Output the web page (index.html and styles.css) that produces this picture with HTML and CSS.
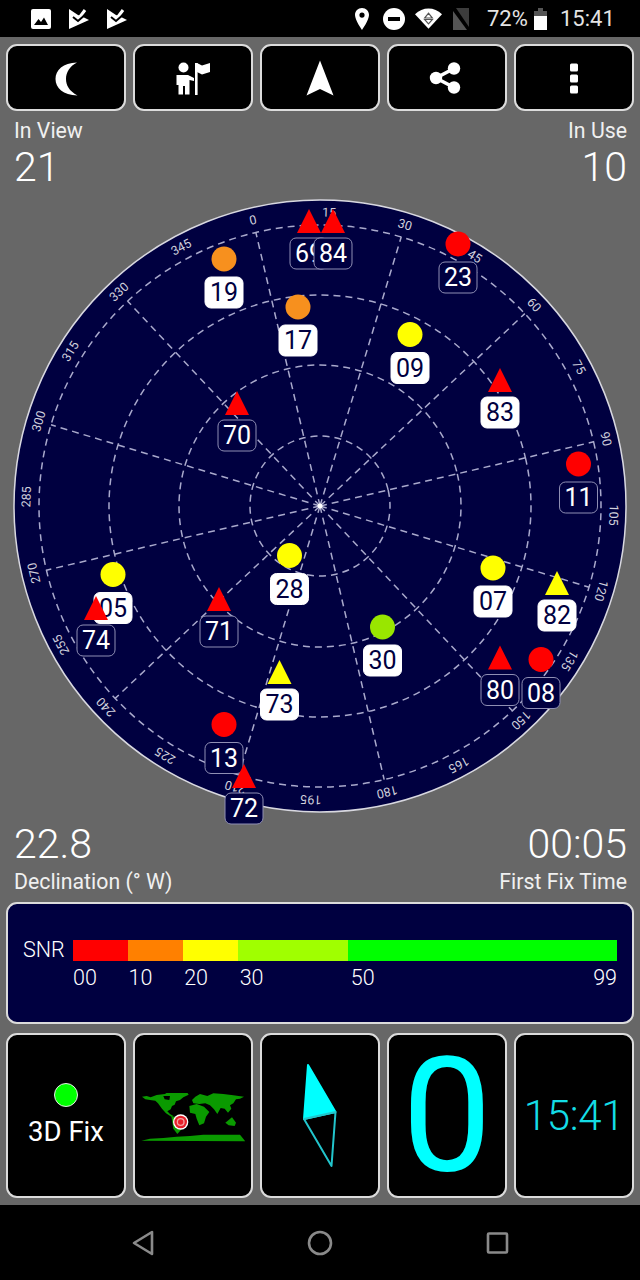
FILE: index.html
```html
<!DOCTYPE html>
<html lang="en">
<head>
    <meta charset="UTF-8">
    <meta name="viewport" content="width=device-width, initial-scale=1.0">
    <title>GPS Status</title>
    <link rel="stylesheet" href="styles.css">
</head>
<body>
    <div class="status-bar">
        <div class="status-left">
            <svg class="st-icon" width="20" height="20" viewBox="0 0 20 20">
                <rect width="20" height="20" rx="2" fill="#fff"/>
                <path d="M3 16 L7.5 10 L10 13 L13 8.5 L17 16Z" fill="#000"/>
            </svg>
            <svg class="st-icon" width="20" height="20" viewBox="0 0 20 20">
                <path d="M0 0 L9 6 L12 7 L20 11 L0 20Z" fill="#fff"/>
                <path d="M5 7 L9 10.5 L16 1" fill="none" stroke="#fff" stroke-width="3"/>
                <path d="M4 8 L9 12 L17 5" fill="none" stroke="#000" stroke-width="2"/>
            </svg>
            <svg class="st-icon" width="20" height="20" viewBox="0 0 20 20">
                <path d="M0 0 L9 6 L12 7 L20 11 L0 20Z" fill="#fff"/>
                <path d="M5 7 L9 10.5 L16 1" fill="none" stroke="#fff" stroke-width="3"/>
                <path d="M4 8 L9 12 L17 5" fill="none" stroke="#000" stroke-width="2"/>
            </svg>
        </div>
        <div class="status-right">
            <svg class="st-pin" width="14" height="22" viewBox="0 0 14 22">
                <path fill-rule="evenodd" d="M7 0 C3 0 0 3 0 7 C0 12 7 22 7 22 C7 22 14 12 14 7 C14 3 11 0 7 0Z M7 4.5 A2.6 2.6 0 1 1 7 9.7 A2.6 2.6 0 1 1 7 4.5Z" fill="#fff"/>
            </svg>
            <svg class="st-dnd" width="22" height="22" viewBox="0 0 22 22">
                <circle cx="11" cy="11" r="11" fill="#fff"/>
                <rect x="5" y="9" width="12" height="4" fill="#000"/>
            </svg>
            <svg class="st-wifi" width="27" height="21" viewBox="0 0 28 21">
                <path d="M0 6 C8 -2 20 -2 28 6 L14 21Z" fill="#fff"/>
                <path d="M14 5 L18 10 H10Z M14 16 L10 11.5 H18Z" fill="none" stroke="#555" stroke-width="1.2"/>
            </svg>
            <svg class="st-sim" width="20" height="22" viewBox="0 0 20 22">
                <path d="M4 0 H17 V19Z" fill="#3c3c3c"/>
                <path d="M1 3 L15 22 H1Z" fill="#555"/>
            </svg>
            <span class="st-pct">72%</span>
            <svg class="st-batt" width="13" height="22" viewBox="0 0 13 22">
                <path d="M4 0 H9 V3 H13 V8 H0 V3 H4Z" fill="#555"/>
                <rect y="8" width="13" height="14" fill="#fff"/>
            </svg>
            <span class="st-time">15:41</span>
        </div>
    </div>

    <div class="toolbar">
        <button class="tool-btn">
            <svg width="40" height="40" viewBox="0 0 40 40">
                <path d="M31 4.5 C17 5 9.5 12 9.5 21 C9.5 30 17 37 31.5 37.5 C23 33 20 27 20 21 C20 14 24 8 31 4.5Z" fill="#fff"/>
            </svg>
        </button>
        <button class="tool-btn">
            <svg width="40" height="40" viewBox="0 0 40 40">
                <circle cx="10.5" cy="9.5" r="5" fill="#fff"/>
                <rect x="22" y="5" width="2.6" height="32" fill="#fff"/>
                <path d="M24 5 L29 7.5 L37 5 V14 L29 16.5 L24 14Z" fill="#fff"/>
                <path d="M3.5 17 H15 L21 20 V23 L16.5 22 V36.5 H12 V28 H10 V36.5 H5.5 V27 H3.5Z" fill="#fff"/>
            </svg>
        </button>
        <button class="tool-btn">
            <svg width="40" height="40" viewBox="0 0 40 40">
                <path d="M20 2.5 L33.5 37.5 L20 31 L6.5 37.5Z" fill="#fff"/>
            </svg>
        </button>
        <button class="tool-btn">
            <svg width="40" height="40" viewBox="0 0 40 40">
                <path d="M27 10.5 L9 20 L27 29.5" fill="none" stroke="#fff" stroke-width="3.5"/>
                <circle cx="9" cy="20" r="6.2" fill="#fff"/>
                <circle cx="27" cy="10.5" r="6.2" fill="#fff"/>
                <circle cx="27" cy="29.5" r="6.2" fill="#fff"/>
            </svg>
        </button>
        <button class="tool-btn">
            <svg width="40" height="40" viewBox="0 0 40 40">
                <rect x="16" y="5.5" width="8" height="8" rx="1.5" fill="#fff"/>
                <rect x="16" y="16.5" width="8" height="8" rx="1.5" fill="#fff"/>
                <rect x="16" y="27.5" width="8" height="8" rx="1.5" fill="#fff"/>
            </svg>
        </button>
    </div>

    <div class="stats stats-top">
        <div class="stat">
            <div class="stat-label">In View</div>
            <div class="stat-value">21</div>
        </div>
        <div class="stat stat-right">
            <div class="stat-label">In Use</div>
            <div class="stat-value">10</div>
        </div>
    </div>

    <svg class="sky" width="640" height="625" viewBox="0 195 640 625">
        <circle cx="320" cy="506" r="306" class="sky-disc"/>
        <g transform="translate(320 506) rotate(-13.2)">
            <circle r="281" class="grid"/>
            <circle r="211" class="grid"/>
            <circle r="141" class="grid"/>
            <circle r="70" class="grid"/>
            <line y2="-281" class="grid" transform="rotate(0)"/>
            <line y2="-281" class="grid" transform="rotate(30)"/>
            <line y2="-281" class="grid" transform="rotate(60)"/>
            <line y2="-281" class="grid" transform="rotate(90)"/>
            <line y2="-281" class="grid" transform="rotate(120)"/>
            <line y2="-281" class="grid" transform="rotate(150)"/>
            <line y2="-281" class="grid" transform="rotate(180)"/>
            <line y2="-281" class="grid" transform="rotate(210)"/>
            <line y2="-281" class="grid" transform="rotate(240)"/>
            <line y2="-281" class="grid" transform="rotate(270)"/>
            <line y2="-281" class="grid" transform="rotate(300)"/>
            <line y2="-281" class="grid" transform="rotate(330)"/>
            <text class="tick" transform="rotate(0) translate(0 -294)">0</text>
            <text class="tick" transform="rotate(15) translate(0 -294)">15</text>
            <text class="tick" transform="rotate(30) translate(0 -294)">30</text>
            <text class="tick" transform="rotate(45) translate(0 -294)">45</text>
            <text class="tick" transform="rotate(60) translate(0 -294)">60</text>
            <text class="tick" transform="rotate(75) translate(0 -294)">75</text>
            <text class="tick" transform="rotate(90) translate(0 -294)">90</text>
            <text class="tick" transform="rotate(105) translate(0 -294)">105</text>
            <text class="tick" transform="rotate(120) translate(0 -294)">120</text>
            <text class="tick" transform="rotate(135) translate(0 -294)">135</text>
            <text class="tick" transform="rotate(150) translate(0 -294)">150</text>
            <text class="tick" transform="rotate(165) translate(0 -294)">165</text>
            <text class="tick" transform="rotate(180) translate(0 -294)">180</text>
            <text class="tick" transform="rotate(195) translate(0 -294)">195</text>
            <text class="tick" transform="rotate(210) translate(0 -294)">210</text>
            <text class="tick" transform="rotate(225) translate(0 -294)">225</text>
            <text class="tick" transform="rotate(240) translate(0 -294)">240</text>
            <text class="tick" transform="rotate(255) translate(0 -294)">255</text>
            <text class="tick" transform="rotate(270) translate(0 -294)">270</text>
            <text class="tick" transform="rotate(285) translate(0 -294)">285</text>
            <text class="tick" transform="rotate(300) translate(0 -294)">300</text>
            <text class="tick" transform="rotate(315) translate(0 -294)">315</text>
            <text class="tick" transform="rotate(330) translate(0 -294)">330</text>
            <text class="tick" transform="rotate(345) translate(0 -294)">345</text>
            <circle r="2.5" fill="#fff"/>
        </g>

        <!-- satellites: circle = GPS, triangle = GLONASS, white label = in use -->
        <g transform="translate(224 259)"><circle r="12.5" class="orange"/><rect x="-19" y="18" width="38" height="31" rx="6" class="tag-on"/><text y="42" class="num-on">19</text></g>
        <g transform="translate(298 307)"><circle r="12.5" class="orange"/><rect x="-19" y="18" width="38" height="31" rx="6" class="tag-on"/><text y="42" class="num-on">17</text></g>
        <g transform="translate(309 233)"><path d="M0 -24 L12 0 H-12Z" class="red"/><rect x="-19" y="5" width="38" height="31" rx="6" class="tag-off"/><text y="29" class="num-off">69</text></g>
        <g transform="translate(333 233)"><path d="M0 -24 L12 0 H-12Z" class="red"/><rect x="-19" y="5" width="38" height="31" rx="6" class="tag-off"/><text y="29" class="num-off">84</text></g>
        <g transform="translate(458 244)"><circle r="12.5" class="red"/><rect x="-19" y="18" width="38" height="31" rx="6" class="tag-off"/><text y="42" class="num-off">23</text></g>
        <g transform="translate(410 334.5)"><circle r="12.5" class="yellow"/><rect x="-19" y="18" width="38" height="31" rx="6" class="tag-on"/><text y="42" class="num-on">09</text></g>
        <g transform="translate(500 392)"><path d="M0 -24 L12 0 H-12Z" class="red"/><rect x="-19" y="5" width="38" height="31" rx="6" class="tag-on"/><text y="29" class="num-on">83</text></g>
        <g transform="translate(237 415)"><path d="M0 -24 L12 0 H-12Z" class="red"/><rect x="-19" y="5" width="38" height="31" rx="6" class="tag-off"/><text y="29" class="num-off">70</text></g>
        <g transform="translate(578.5 464)"><circle r="12.5" class="red"/><rect x="-19" y="18" width="38" height="31" rx="6" class="tag-off"/><text y="42" class="num-off">11</text></g>
        <g transform="translate(289.5 555.5)"><circle r="12.5" class="yellow"/><rect x="-19" y="18" width="38" height="31" rx="6" class="tag-on"/><text y="42" class="num-on">28</text></g>
        <g transform="translate(113 574.5)"><circle r="12.5" class="yellow"/><rect x="-19" y="18" width="38" height="31" rx="6" class="tag-on"/><text y="42" class="num-on">05</text></g>
        <g transform="translate(96 620)"><path d="M0 -24 L12 0 H-12Z" class="red"/><rect x="-19" y="5" width="38" height="31" rx="6" class="tag-off"/><text y="29" class="num-off">74</text></g>
        <g transform="translate(219 611)"><path d="M0 -24 L12 0 H-12Z" class="red"/><rect x="-19" y="5" width="38" height="31" rx="6" class="tag-off"/><text y="29" class="num-off">71</text></g>
        <g transform="translate(279.5 684)"><path d="M0 -24 L12 0 H-12Z" class="yellow"/><rect x="-19" y="5" width="38" height="31" rx="6" class="tag-on"/><text y="29" class="num-on">73</text></g>
        <g transform="translate(224 724.5)"><circle r="12.5" class="red"/><rect x="-19" y="18" width="38" height="31" rx="6" class="tag-off"/><text y="42" class="num-off">13</text></g>
        <g transform="translate(244 788)"><path d="M0 -24 L12 0 H-12Z" class="red"/><rect x="-19" y="5" width="38" height="31" rx="6" class="tag-off"/><text y="29" class="num-off">72</text></g>
        <g transform="translate(493 568)"><circle r="12.5" class="yellow"/><rect x="-19" y="18" width="38" height="31" rx="6" class="tag-on"/><text y="42" class="num-on">07</text></g>
        <g transform="translate(557 595)"><path d="M0 -24 L12 0 H-12Z" class="yellow"/><rect x="-19" y="5" width="38" height="31" rx="6" class="tag-on"/><text y="29" class="num-on">82</text></g>
        <g transform="translate(382.5 627)"><circle r="12.5" class="lime"/><rect x="-19" y="18" width="38" height="31" rx="6" class="tag-on"/><text y="42" class="num-on">30</text></g>
        <g transform="translate(500 669.5)"><path d="M0 -24 L12 0 H-12Z" class="red"/><rect x="-19" y="5" width="38" height="31" rx="6" class="tag-off"/><text y="29" class="num-off">80</text></g>
        <g transform="translate(541 659.5)"><circle r="12.5" class="red"/><rect x="-19" y="18" width="38" height="31" rx="6" class="tag-off"/><text y="42" class="num-off">08</text></g>
    </svg>

    <div class="stats stats-bottom">
        <div class="stat">
            <div class="stat-value">22.8</div>
            <div class="stat-label">Declination (° W)</div>
        </div>
        <div class="stat stat-right">
            <div class="stat-value">00:05</div>
            <div class="stat-label">First Fix Time</div>
        </div>
    </div>

    <div class="snr-card">
        <div class="snr-name">SNR</div>
        <div class="snr-scale">
            <div class="snr-bar">
                <div class="seg seg-red"></div>
                <div class="seg seg-orange"></div>
                <div class="seg seg-yellow"></div>
                <div class="seg seg-lime"></div>
                <div class="seg seg-green"></div>
            </div>
            <div class="snr-nums">
                <span class="seg-red-n">00</span>
                <span class="seg-orange-n">10</span>
                <span class="seg-yellow-n">20</span>
                <span class="seg-lime-n">30</span>
                <span class="seg-green-n">50</span>
                <span class="seg-end">99</span>
            </div>
        </div>
    </div>

    <div class="cards">
        <div class="card">
            <div class="fix-dot"></div>
            <div class="fix-text">3D Fix</div>
        </div>
        <div class="card">
            <svg class="world" width="104" height="49" viewBox="33 69 312 147">
                <path class="land" d="M36 80 L50 78 L62 82 L80 75 L105 72 L112 67 L135 66 L172 68 L176 74 L160 82 L150 90 L138 94 L134 104 L126 108 L122 118 L112 124 L120 132 L130 138 L124 140 L108 130 L96 116 L84 100 L76 92 L60 90 L46 88Z"/>
                <path class="gap" d="M100 78 L120 78 L118 90 L104 88Z"/>
                <path class="land" d="M124 138 L170 150 L160 172 L142 192 L130 176Z"/>
                <path class="land" d="M186 90 L196 80 L210 72 L232 78 L250 70 L280 72 L310 76 L342 80 L330 86 L318 88 L310 100 L300 106 L304 116 L294 128 L284 116 L272 114 L262 132 L252 118 L240 106 L226 100 L208 102 L190 100Z"/>
                <path class="land" d="M178 108 L200 102 L222 110 L238 126 L228 140 L222 160 L208 166 L200 146 L196 132 L180 128Z"/>
                <path class="land" d="M286 158 L296 150 L306 142 L318 158 L314 168 L296 166Z"/>
                <path class="land" d="M34 212 L60 206 L100 204 L140 200 L180 198 L220 194 L330 194 L338 204 L346 214Z"/>
                <circle cx="152" cy="156" r="23" fill="#fff"/>
                <circle cx="152" cy="156" r="19" fill="#e8202a"/>
                <circle cx="152" cy="156" r="12" fill="#f4a0a0"/>
                <circle cx="152" cy="156" r="8" fill="#e8202a"/>
            </svg>
        </div>
        <div class="card">
            <svg width="116" height="161" viewBox="0 0 116 161">
                <path d="M46 30 L73.5 77 L42 84Z" fill="#00ffff" stroke="#00ffff" stroke-linejoin="round" stroke-width="2"/>
                <path d="M42 84 L73.5 77 L69.5 131Z" fill="none" stroke="#22c5cc" stroke-linejoin="round" stroke-width="2"/>
            </svg>
        </div>
        <div class="card"><span class="big-zero">0</span></div>
        <div class="card"><span class="clock">15:41</span></div>
    </div>

    <div class="nav-bar">
        <svg width="24" height="26" viewBox="0 0 24 26">
            <path d="M21 2 V24 L3 13Z" fill="none" stroke="#8a8a8a" stroke-width="2.6" stroke-linejoin="round"/>
        </svg>
        <svg width="26" height="26" viewBox="0 0 26 26">
            <circle cx="13" cy="13" r="11" fill="none" stroke="#8a8a8a" stroke-width="2.6"/>
        </svg>
        <svg width="24" height="24" viewBox="0 0 24 24">
            <rect x="3" y="2.5" width="19" height="19" rx="1" fill="none" stroke="#8a8a8a" stroke-width="2.6"/>
        </svg>
    </div>
</body>
</html>
```

FILE: styles.css
```css
* {
    box-sizing: border-box;
}

body {
    margin: 0;
    width: 640px;
    height: 1280px;
    overflow: hidden;
    background-color: #676767;
    font-family: Roboto, "Liberation Sans", sans-serif;
    color: #fff;
    display: flex;
    flex-direction: column;
}

/* status bar */
.status-bar {
    height: 37px;
    flex: none;
    background-color: #000;
    display: flex;
    align-items: center;
    justify-content: space-between;
    padding: 0 26px 0 31px;
}

.status-left {
    display: flex;
    gap: 18px;
}

.status-right {
    display: flex;
    align-items: center;
    font-size: 22px;
    color: #e4e4e4;
}

.st-icon,
.st-pin,
.st-dnd,
.st-wifi,
.st-sim,
.st-batt {
    display: block;
}

.st-dnd {
    margin-left: 14px;
}

.st-wifi {
    margin-left: 10px;
}

.st-sim {
    margin-left: 10px;
}

.st-pct {
    margin-left: 15px;
    width: 40px;
    white-space: nowrap;
}

.st-batt {
    margin-left: 7px;
}

.st-time {
    margin-left: 13px;
    width: 54px;
    white-space: nowrap;
}

/* top buttons */
.toolbar {
    flex: none;
    display: grid;
    grid-template-columns: repeat(5, 120px);
    gap: 7px;
    padding: 7px 6px 0;
}

.tool-btn {
    height: 67px;
    padding: 0;
    background-color: #000;
    border: 2px solid #dcdcdc;
    border-radius: 11px;
    display: flex;
    align-items: center;
    justify-content: center;
}

/* number pairs at the corners of the sky plot */
.stats {
    flex: none;
    display: flex;
    justify-content: space-between;
    padding: 0 13px 0 14px;
}

.stat-right {
    text-align: right;
}

.stat-label {
    font-size: 21.3px;
    line-height: 24px;
    color: #f0f0f0;
}

.stat-value {
    font-size: 41px;
    line-height: 48px;
    font-weight: 300;
}

.stats-top {
    height: 84px;
    padding-top: 8px;
}

.stats-bottom {
    height: 82px;
}

.stats-bottom .stat-label {
    margin-top: 2px;
}

/* sky plot: the 72 label hangs below the disc */
.sky {
    display: block;
    flex: none;
    overflow: visible;
}

.sky-disc {
    fill: #000040;
    stroke: #d8d8e0;
    stroke-width: 1.5;
}

.grid {
    fill: none;
    stroke: #a9a9cc;
    stroke-width: 1.5;
    stroke-dasharray: 7 5;
}

.tick {
    font-size: 12.5px;
    fill: #d0d0dc;
    text-anchor: middle;
    dominant-baseline: central;
}

.red {
    fill: #ff0000;
}

.orange {
    fill: #f7901e;
}

.yellow {
    fill: #ffff00;
}

.lime {
    fill: #99e600;
}

.tag-on {
    fill: #fff;
    stroke: #fff;
}

.tag-off {
    fill: #000040;
    stroke: #8f8fb4;
}

.num-on,
.num-off {
    font-size: 25px;
    text-anchor: middle;
}

.num-on {
    fill: #000040;
}

.num-off {
    fill: #fff;
}

/* SNR legend */
.snr-card {
    flex: none;
    height: 122px;
    margin: 0 6px;
    background-color: #000040;
    border: 2px solid #dcdcdc;
    border-radius: 11px;
    display: flex;
    padding: 36px 15px 0 15px;
}

.snr-name {
    width: 50px;
    flex: none;
    font-size: 21.5px;
    line-height: 20px;
    font-weight: 300;
}

.snr-scale {
    flex: 1;
}

.snr-bar {
    display: flex;
    height: 21px;
}

.seg-red {
    flex: 10;
    background-color: #ff0000;
}

.seg-orange {
    flex: 10;
    background-color: #ff8000;
}

.seg-yellow {
    flex: 10;
    background-color: #ffff00;
}

.seg-lime {
    flex: 20;
    background-color: #a0ff00;
}

.seg-green {
    flex: 49;
    background-color: #00ff00;
}

.snr-nums {
    display: flex;
    margin-top: 5px;
    font-size: 21.5px;
    line-height: 24px;
    font-weight: 300;
}

.seg-red-n,
.seg-orange-n,
.seg-yellow-n {
    flex: 10;
}

.seg-lime-n {
    flex: 20;
}

.seg-green-n {
    flex: 49;
}

.seg-end {
    margin-left: -30px;
}

/* bottom tiles */
.cards {
    flex: none;
    display: grid;
    grid-template-columns: repeat(5, 120px);
    gap: 7px;
    padding: 9px 6px 0;
}

.card {
    height: 165px;
    background-color: #000;
    border: 2px solid #dcdcdc;
    border-radius: 11px;
    display: flex;
    flex-direction: column;
    align-items: center;
    justify-content: center;
}

.fix-dot {
    width: 24px;
    height: 24px;
    border-radius: 50%;
    background-color: #00ff00;
    border: 1px solid #e8e8e8;
}

.fix-text {
    margin-top: 9px;
    font-size: 27.5px;
    line-height: 32px;
}

.world {
    display: block;
    margin-top: 4px;
}

.land {
    fill: #0a9a00;
}

.gap {
    fill: #000;
}

.big-zero {
    font-size: 160px;
    line-height: 160px;
    color: #00ffff;
}

.clock {
    font-size: 42px;
    letter-spacing: -0.3px;
    font-weight: 300;
    color: #14dde6;
}

/* android nav */
.nav-bar {
    flex: 1;
    margin-top: 7px;
    background-color: #000;
    display: flex;
    align-items: center;
    justify-content: center;
    gap: 152px;
}
```
